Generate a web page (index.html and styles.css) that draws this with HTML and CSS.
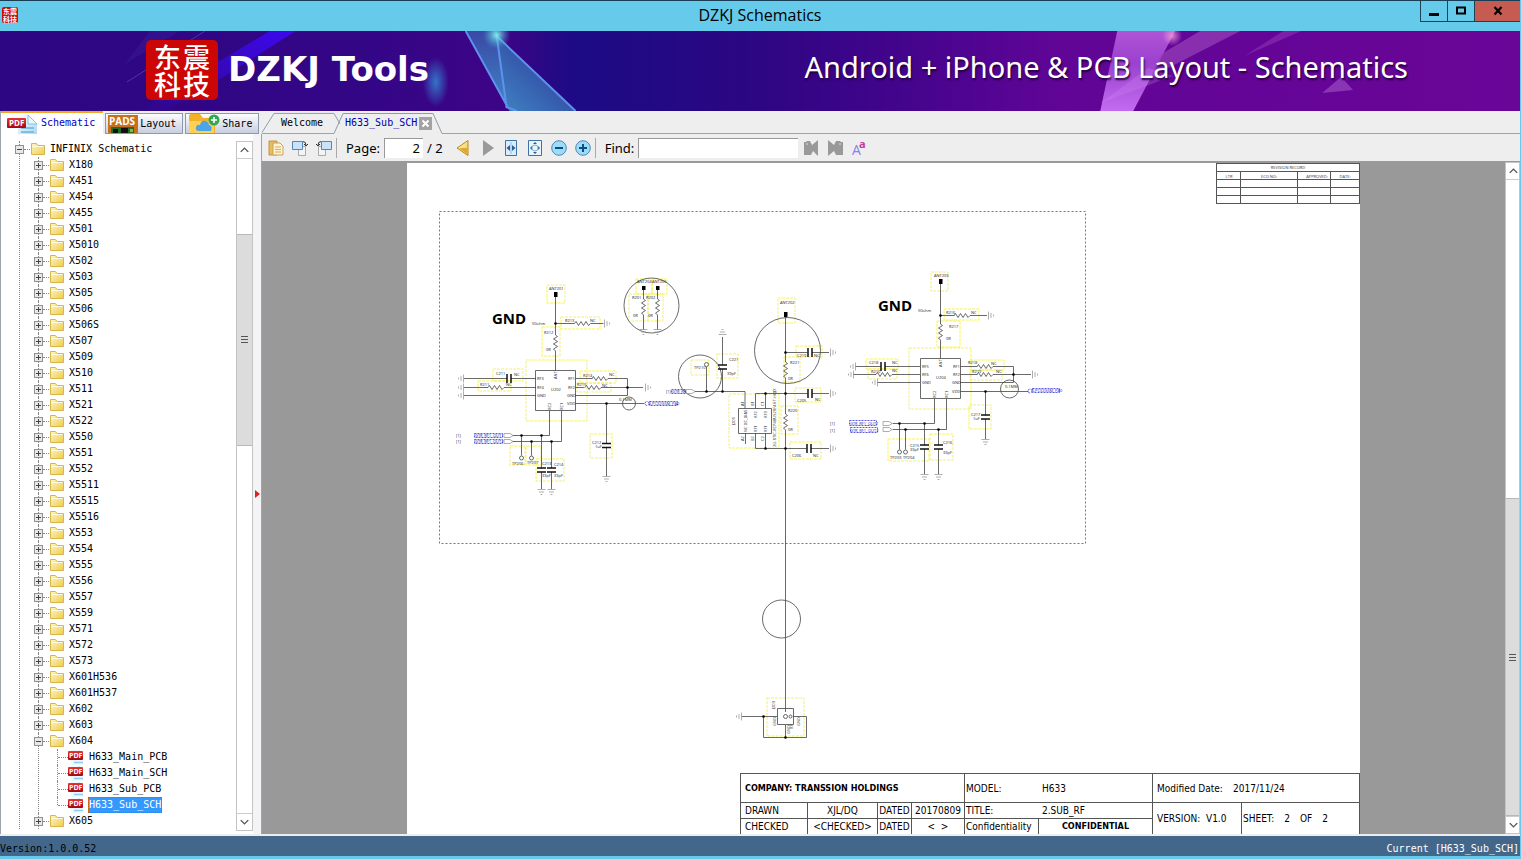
FILE: index.html
```html
<!DOCTYPE html>
<html lang="en">
<head>
    <meta charset="UTF-8">
    <meta name="viewport" content="width=device-width, initial-scale=1.0">
    <title>DZKJ Schematics</title>
    <link rel="stylesheet" href="styles.css">
</head>
<body>

    <!-- shared icons -->
    <svg class="defs" aria-hidden="true">
        <defs>
            <linearGradient id="gold" x1="0" y1="0" x2="1" y2="1">
                <stop offset="0" stop-color="#fff6bd"/><stop offset="1" stop-color="#efcb55"/>
            </linearGradient>
            <linearGradient id="paper" x1="0" y1="0" x2="1" y2="1">
                <stop offset="0" stop-color="#ffffff"/><stop offset="1" stop-color="#a9d8f5"/>
            </linearGradient>
            <linearGradient id="red" x1="0" y1="0" x2="0" y2="1">
                <stop offset="0" stop-color="#e2353b"/><stop offset="1" stop-color="#a80510"/>
            </linearGradient>
            <symbol id="folder" viewBox="0 0 16 14">
                <path d="M1.500 12.500v-11h5l1.500 2h6.500v9z" fill="url(#gold)" stroke="#d9b64c"/>
                <path d="M2.500 4.500h11" stroke="#fffbe0"/>
            </symbol>
            <symbol id="pdf" viewBox="0 0 16 16">
                <path d="M3 1h8l4 4v11H3z" fill="#eef7fd"/>
                <path d="M11 1l4 4h-4z" fill="#9fd3f0"/>
                <path d="M6 13.500h9" stroke="#8fcdf0" stroke-width="1.500"/>
                <rect x="0" y="2" width="15" height="9" rx="1" fill="url(#red)"/>
                <text x="1" y="9" font-size="7">PDF</text>
            </symbol>
            <symbol id="up" viewBox="0 0 16 16"><path d="M4 10l4-4 4 4" fill="none" stroke="#555" stroke-width="1.500"/></symbol>
            <symbol id="down" viewBox="0 0 16 16"><path d="M4 6l4 4 4-4" fill="none" stroke="#555" stroke-width="1.500"/></symbol>
        </defs>
    </svg>

    <header class="titlebar">
        <span class="app-icon">东震<br>科技</span>
        <h1>DZKJ Schematics</h1>
        <div class="window-buttons">
            <button aria-label="Minimize"><svg width="12" height="12"><path d="M1 9.500h10" stroke="#000" stroke-width="3"/></svg></button>
            <button aria-label="Maximize"><svg width="12" height="12"><path d="M2 2.500h8v6h-8z" fill="none" stroke="#000" stroke-width="2"/></svg></button>
            <button class="close" aria-label="Close"><svg width="12" height="12"><path d="M2.500 2l7 7.500M9.500 2l-7 7.500" stroke="#000" stroke-width="2.200"/></svg></button>
        </div>
    </header>

    <div class="banner">
        <svg class="banner-art" viewBox="0 0 1521 80" preserveAspectRatio="none" aria-hidden="true">
            <defs>
                <linearGradient id="back">
                    <stop offset="0" stop-color="#2d0683"/><stop offset=".25" stop-color="#340687"/>
                    <stop offset=".33" stop-color="#3d0486"/><stop offset=".38" stop-color="#1b0b84"/>
                    <stop offset=".5" stop-color="#2d0683"/><stop offset=".58" stop-color="#40048b"/>
                    <stop offset=".7" stop-color="#610597"/><stop offset="1" stop-color="#6a0598"/>
                </linearGradient>
                <linearGradient id="beam" x1="1" y1="0" x2="0" y2="1">
                    <stop offset="0" stop-color="#3d08ee"/><stop offset="1" stop-color="#3d08ee" stop-opacity="0"/>
                </linearGradient>
                <linearGradient id="glass" x1="0" y1="0" x2="0" y2="1">
                    <stop offset="0" stop-color="#3a48a6"/><stop offset="1" stop-color="#3f86c4"/>
                </linearGradient>
                <linearGradient id="pane" x1="0" y1="1" x2="1" y2="0">
                    <stop offset="0" stop-color="#3f86c4"/><stop offset="1" stop-color="#2c2a92"/>
                </linearGradient>
                <linearGradient id="pink" x1="0" y1="0" x2="0" y2="1">
                    <stop offset="0" stop-color="#b154d6"/><stop offset=".4" stop-color="#9b41cf"/><stop offset="1" stop-color="#c36bf0"/>
                </linearGradient>
                <radialGradient id="spot"><stop offset="0" stop-color="#3474c8"/><stop offset="1" stop-color="#3474c8" stop-opacity="0"/></radialGradient>
                <radialGradient id="flare"><stop offset="0" stop-color="#7ff0f0"/><stop offset="1" stop-color="#43a0c8" stop-opacity="0"/></radialGradient>
                <radialGradient id="glow"><stop offset="0" stop-color="#f7a0dc" stop-opacity=".8"/><stop offset="1" stop-color="#f394d7" stop-opacity="0"/></radialGradient>
            </defs>
            <rect width="1521" height="80" fill="url(#back)"/>
            <path d="M270 0h26L225 45 165 80h-28z" fill="url(#beam)"/>
            <path d="M205 0l-20 13M165 27l-38 24" stroke="#6650ba" stroke-width="1" opacity=".6"/>
            <path d="M150 0h30l-55 33z" fill="#3e249c" opacity=".35"/>
            <ellipse cx="436" cy="51" rx="13" ry="25" fill="url(#spot)"/>
            <path d="M466 0h31l10 76z" fill="url(#glass)"/>
            <path d="M497 5l79 75h-66l-3-4z" fill="url(#pane)"/>
            <path d="M466 0l42 76M497 5l10 72M497 5l79 75M507 76l10 4" fill="none" stroke="#5e91ec" stroke-width="2"/>
            <circle cx="497" cy="4" r="14" fill="url(#flare)"/>
            <path d="M1118 0h58l-42 80h-33z" fill="url(#pink)"/>
            <path d="M1201 0h40l-70 36-21 12 12-25z" fill="#9741b8" opacity=".7"/>
            <path d="M1284 0h18l-57 25z" fill="#8526ab" opacity=".8"/>
            <path d="M1323 62l19-16 12 13z" fill="#8935b4"/>
            <path d="M1101 72l73-27-25-8z" fill="#d28af5" opacity=".25"/>
            <circle cx="1173" cy="5" r="10" fill="url(#glow)"/>
        </svg>
        <div class="logo"><span>东</span><span>震</span><span>科</span><span>技</span></div>
        <strong>DZKJ Tools</strong>
        <p>Android + iPhone &amp; PCB Layout - Schematics</p>
    </div>

    <main>
        <aside class="sidebar">
            <nav class="side-tabs">
                <button class="active">
                    <svg width="32" height="20" viewBox="0 0 32 20"><path d="M11 1h10l9 9v10H11z" fill="url(#paper)"/><path d="M21 1l9 9h-9z" fill="#e9f7ff" stroke="#68aed0" stroke-width=".7"/><path d="M14 14h13M14 18h13" stroke="#81bee3" stroke-width="2"/><rect y="4" width="19" height="10" rx="1" fill="url(#red)"/><text x="2" y="12" font-size="8">PDF</text></svg>
                    Schematic
                </button>
                <button>
                    <svg width="32" height="18" viewBox="0 0 32 18"><path d="M1 0h30v18H1z" fill="#c8711c"/><path d="M4 12h23v6H4z" fill="#236c27"/><path d="M6 14h5v4H6zM14 13h7v5h-7z" fill="#111"/><path d="M23 14h3v3h-3z" fill="#8fb74a"/><text x="2" y="10" font-size="10">PADS</text></svg>
                    Layout
                </button>
                <button class="share">
                    <svg width="32" height="19" viewBox="0 0 32 19"><path d="M1 2q0-2 2-2h9l3 4h12v15H1z" fill="#f3b129"/><path d="M1 7h25v12H1z" fill="#ffd052"/><path d="M11 17q-4 0-3-4 1-3 4-2 1-5 6-4 3 1 3 4 4 1 2 6z" fill="#4ba5e6"/><circle cx="26" cy="6" r="5.500" fill="#32a852"/><path d="M26 3v6M23 6h6" stroke="#fff" stroke-width="1.600"/></svg>
                    Share
                </button>
            </nav>
            <div class="side-body">
                <div class="tree-pane">
                    <ul class="tree">
                        <li class="root"><button class="toggle open" aria-label="Collapse"></button><svg class="icon"><use href="#folder"/></svg>INFINIX Schematic
                            <ul id="folders"></ul>
                        </li>
                    </ul>
                    <div class="scrollbar side-scroll">
                        <button aria-label="Scroll up"><svg><use href="#up"/></svg></button>
                        <div class="track"><div class="thumb"></div></div>
                        <button aria-label="Scroll down"><svg><use href="#down"/></svg></button>
                    </div>
                </div>
                <div class="splitter"><svg width="5" height="8"><path d="M0 0l5 4-5 4z" fill="#e02020"/></svg></div>
            </div>
        </aside>

        <section class="workspace">
            <nav class="doc-tabs">
                <button class="doc-tab welcome"><svg viewBox="0 0 72 22" preserveAspectRatio="none"><path d="M0 21.500L12 1.500h60l6 11"/></svg>Welcome</button>
                <button class="doc-tab current"><svg viewBox="0 0 108 22" preserveAspectRatio="none"><path d="M0 21.500L9 1.500h90l9 20"/></svg>H633_Sub_SCH<span class="tab-close"><svg width="13" height="13"><path d="M3.500 3.500l6 6M9.500 3.500l-6 6"/></svg></span></button>
                <div class="tab-rest"></div>
            </nav>

            <div class="toolbar">
                <button aria-label="Open"><svg viewBox="0 0 16 16"><path d="M1 1h8v14H1z" fill="#e9bc60" stroke="#c2924a"/><path d="M5 3h7l3 3v9H5z" fill="#fff3d2" stroke="#cda055"/><path d="M7 7h6M7 9.500h6M7 12h6" stroke="#d7a95b"/></svg></button>
                <button aria-label="Rotate right"><svg viewBox="0 0 16 16"><path d="M6.500 6.500h7v9h-7z" fill="#f4f4f4" stroke="#aaa"/><path d="M.500 1.500h10v8H.500z" fill="#c9e4fa" stroke="#5487b5"/><path d="M11 1.500q3 0 3 4M12 4l2 2 2-2" fill="none" stroke="#333"/></svg></button>
                <button aria-label="Rotate left"><svg viewBox="0 0 16 16"><path d="M2.500 6.500h7v9h-7z" fill="#f4f4f4" stroke="#aaa"/><path d="M5.500 1.500h10v8h-10z" fill="#c9e4fa" stroke="#5487b5"/><path d="M5 1.500q-3 0-3 4M0 4l2 2 2-2" fill="none" stroke="#333"/></svg></button>
                <i class="sep"></i>
                <label for="page">Page:</label>
                <input type="text" id="page" value="2">
                <span class="count">/ 2</span>
                <button aria-label="Previous page"><svg viewBox="0 0 16 16"><path d="M13 .500v15L2 8z" fill="url(#gold)" stroke="#b98a19"/><path d="M12 8v6L4 8z" fill="#e0a82c"/></svg></button>
                <button aria-label="Next page"><svg viewBox="0 0 16 16"><path d="M4 0v16l11-8z" fill="#999"/></svg></button>
                <button aria-label="Fit width"><svg viewBox="0 0 16 16"><path d="M2.500.500h11v15h-11z" fill="#d9edfc" stroke="#3e71a7"/><path d="M8 2v12" stroke="#9dbbd6"/><path d="M7 5v6L3.500 8zM9 5v6l3.500-3z" fill="#245f9b"/></svg></button>
                <button aria-label="Fit page"><svg viewBox="0 0 16 16"><path d="M1.500.500h13v15h-13z" fill="#e9f5fe" stroke="#3e71a7"/><path d="M6 4l2-2 2 2zM6 12l2 2 2-2zM5 6L3 8l2 2zM11 6l2 2-2 2z" fill="#245f9b"/><circle cx="8" cy="8" r="3" fill="none" stroke="#86aaca"/></svg></button>
                <button aria-label="Zoom out"><svg viewBox="0 0 16 16"><circle cx="8" cy="8" r="7.300" fill="#9bdcfb" stroke="#5787b3"/><path d="M4 8h8" stroke="#0c4e82" stroke-width="2"/></svg></button>
                <button aria-label="Zoom in"><svg viewBox="0 0 16 16"><circle cx="8" cy="8" r="7.300" fill="#9bdcfb" stroke="#5787b3"/><path d="M4 8h8M8 4v8" stroke="#0c4e82" stroke-width="2"/></svg></button>
                <i class="sep"></i>
                <label for="find">Find:</label>
                <input type="text" id="find">
                <button aria-label="Find previous"><svg viewBox="0 0 16 16"><path d="M1 2h2l1-1h3l2 4 6-5v16l-5-5-2 4H1z" fill="#999"/><path d="M3 4h2" stroke="#ddd"/></svg></button>
                <button aria-label="Find next"><svg viewBox="0 0 16 16"><path d="M1 0l6 5 2-4h4l1 1h2v13H9l-2-4-6 5z" fill="#999"/><path d="M12 4h2" stroke="#ddd"/></svg></button>
                <button aria-label="Match case"><svg viewBox="0 0 16 16"><text x="1" y="15" font-size="14" fill="#8b7fe8">A</text><text x="8" y="8" font-size="11" font-weight="bold" fill="#c038a0">a</text></svg></button>
            </div>

            <div class="viewer">
                <div class="canvas">
                    <article class="sheet">
                        <table class="revision">
                            <colgroup><col class="r1"><col class="r2"><col class="r3"><col class="r4"></colgroup>
                            <tr><th colspan="4"><svg width="36" height="6"><text x="18" y="4" text-anchor="middle">REVISION RECORD</text></svg></th></tr>
                            <tr>
                                <th><svg width="20" height="6"><text x="10" y="5" text-anchor="middle">LTR</text></svg></th>
                                <th><svg width="36" height="6"><text x="18" y="5" text-anchor="middle">ECO NO:</text></svg></th>
                                <th><svg width="30" height="6"><text x="18" y="5" text-anchor="middle">APPROVED:</text></svg></th>
                                <th><svg width="20" height="6"><text x="10" y="5" text-anchor="middle">DATE:</text></svg></th>
                            </tr>
                            <tr><td></td><td></td><td></td><td></td></tr>
                            <tr><td></td><td></td><td></td><td></td></tr>
                            <tr><td></td><td></td><td></td><td></td></tr>
                        </table>

                        <svg class="drawing" viewBox="407 204 953 569">
                            <defs>
                                <path id="zh" d="M-8 0l1.500-2 2.500 4 2.500-4 2.500 4 2.500-4 2.500 4L8 0"/>
                                <path id="zv" d="M0-8l2 1.500-4 2.500 4 2.500-4 2.500 4 2.500-4 2.500L0 8"/>
                                <path id="ch" d="M-2-4.500v9M2-4.500v9"/>
                                <path id="cv" d="M-4.500-2h9M-4.500 2h9"/>
                                <path id="gr" d="M0-4v8M2.500-2.500v5M5-1v2"/>
                                <path id="gl" d="M0-4v8M-2.500-2.500v5M-5-1v2"/>
                                <path id="gd" d="M-4 0h8M-2.500 2.500h5M-1 5h2"/>
                                <path id="gu" d="M-4 0h8M-2.500-2.500h5M-1-5h2"/>
                                <path id="port" d="M0-2h6l3 2-3 2H0z"/>
                            </defs>

                            <rect class="frame" x="439.500" y="211.500" width="646" height="332"/>

                            <!-- component outlines -->
                            <path class="part" d="M547 285h18v18h-18zM561 317h39v12h-39zM542 327h18v29h-18zM526 360h61v61h-61zM493 369h30v12h-30zM478 381h33v10h-33zM580 371h36v12h-36zM577 383h34v9h-34zM590 434h22v24h-22zM510 446h15v19h-15zM526 446h15v19h-15zM536 459h28v22h-28z
                                M636 279h16v15h-16zM652 279h15v15h-15zM629 294h19v27h-19zM648 294h15v27h-15zM691 360h18v15h-18zM717 354h21v24h-21zM778 298h17v25h-17zM796 346h26v11h-26zM784 357h16v25h-16zM729 394h50v54h-50zM795 388h26v14h-26zM781 406h17v28h-17zM790 442h31v17h-31z
                                M931 272h17v19h-17zM944 309h35v11h-35zM937 321h23v26h-23zM909 348h62v61h-62zM866 359h32v10h-32zM868 369h29v10h-29zM970 360h34v10h-34zM970 370h32v10h-32zM969 405h22v24h-22zM888 439h41v22h-41zM930 434h23v26h-23zM767 698h37v38h-37z"/>

                            <!-- wires -->
                            <path class="wire" d="M555.500 292v43M555.500 351v20M555.500 323.500h19M590.500 323.500h13
                                M464 378.500h43M511 378.500h25M464 387.500h24M504 387.500h32M464 395.500h72
                                M575.500 378.500h17M608 378.500h19.500v17h-52M575.500 387.500h9M601 387.500h42M575.500 403.500h69M606.500 403.500v40M606.500 447v29
                                M549.500 411v24.500h-37M561.500 411v30.500h-49M521.500 435.500v20M531.500 441.500v14M541.500 435.500v33M551.500 441.500v27M541.500 472v17M551.500 472v17
                                M643.500 290v9M643.500 315v15M657.500 290v9M657.500 315v15
                                M706.500 367v24M695 391.500h50v17M722.500 337v28M722.500 369v22M785.500 316v46M785.500 378v36M785.500 430v282
                                M785.500 352.500h22M812 352.500h17M785.500 393.500h22M812 393.500h17M785.500 448.500h21M811 448.500h18
                                M785.500 393.500h-30v15M765.500 393.500v15M745.500 433v11M755.500 433v15.500h30M765.500 433v15
                                M940.500 283v41M940.500 340v18M940.500 315.500h14M970 315.500h17M855 366.500h26M885 366.500h35M853 374.500h23M892 374.500h28M877 382.500h43
                                M960.500 366.500h17M993 366.500h20.500v16h-53M960.500 374.500h17M993 374.500h38M960.500 391.500h68M985.500 391.500v24M985.500 419v20
                                M934.500 399v24.500h-42M946.500 399v30.500h-54M899.500 423.500v26M905.500 429.500v20M924.500 423.500v22M938.500 429.500v16M924.500 449v25M938.500 449v25
                                M742 716.500h35M763.500 716.500v21h43v-21h-13M785.500 725v12"/>
                            <path class="wire" d="M535.500 370.500h40v40h-40zM738.500 408.500h33v25h-33zM920.500 358.500h40v40h-40zM777.500 708.500h16v16h-16z"/>

                            <g class="wire">
                                <circle cx="651.500" cy="305.500" r="27.500"/><circle cx="700" cy="376.500" r="21.500"/><circle cx="787.500" cy="350.500" r="33"/>
                                <circle cx="629" cy="403.500" r="6.500"/><circle cx="1009.500" cy="389" r="9"/><circle cx="781.500" cy="619" r="19"/>
                                <circle cx="521.500" cy="458" r="2"/><circle cx="531.500" cy="458" r="2"/><circle cx="706.500" cy="364.500" r="2"/>
                                <circle cx="899.500" cy="452" r="2"/><circle cx="905.500" cy="452" r="2"/><circle cx="785.500" cy="716.500" r="2"/><circle cx="790.500" cy="716.500" r="1.500"/>
                                <use href="#zh" x="582.500" y="323.500"/><use href="#zv" x="555.500" y="343"/><use href="#zh" x="496" y="387.500"/>
                                <use href="#zh" x="600" y="378.500"/><use href="#zh" x="593" y="387.500"/><use href="#zv" x="643.500" y="307"/><use href="#zv" x="657.500" y="307"/>
                                <use href="#zv" x="785.500" y="370"/><use href="#zv" x="785.500" y="422"/><use href="#zh" x="962" y="315.500"/><use href="#zv" x="940.500" y="332"/>
                                <use href="#zh" x="884" y="374.500"/><use href="#zh" x="985" y="366.500"/><use href="#zh" x="985" y="374.500"/>
                            </g>
                            <g class="plates">
                                <use href="#ch" x="509" y="378.500"/><use href="#cv" x="606.500" y="445.500"/><use href="#cv" x="541.500" y="470"/><use href="#cv" x="551.500" y="470"/>
                                <use href="#cv" x="722.500" y="367"/><use href="#ch" x="810" y="352.500"/><use href="#ch" x="810" y="393.500"/><use href="#ch" x="809" y="448.500"/>
                                <use href="#ch" x="883" y="366.500"/><use href="#cv" x="985.500" y="417"/><use href="#cv" x="924.500" y="447"/><use href="#cv" x="938.500" y="447"/>
                            </g>
                            <g class="ground">
                                <use href="#gr" x="604.500" y="323.500"/><use href="#gl" x="463.500" y="378.500"/><use href="#gl" x="463.500" y="387.500"/><use href="#gl" x="463.500" y="395.500"/><use href="#gr" x="645.500" y="387.500"/>
                                <use href="#gd" x="606.500" y="476.500"/><use href="#gd" x="541.500" y="489.500"/><use href="#gd" x="551.500" y="489.500"/><use href="#gd" x="643.500" y="329.500"/><use href="#gd" x="657.500" y="329.500"/>
                                <use href="#gu" x="722.500" y="334.500"/><use href="#gr" x="830.500" y="352.500"/><use href="#gr" x="830.500" y="393.500"/><use href="#gr" x="830.500" y="448.500"/>
                                <use href="#gr" x="988.500" y="315.500"/><use href="#gl" x="855.500" y="366.500"/><use href="#gl" x="853.500" y="374.500"/><use href="#gl" x="877.500" y="382.500"/><use href="#gr" x="1032.500" y="374.500"/>
                                <use href="#gd" x="985.500" y="439.500"/><use href="#gd" x="924.500" y="474.500"/><use href="#gd" x="938.500" y="474.500"/><use href="#gl" x="741.500" y="716.500"/>
                                <use href="#port" x="504" y="435.500"/><use href="#port" x="504" y="441.500"/><use href="#port" x="686" y="391.500"/><use href="#port" x="883" y="423.500"/><use href="#port" x="883" y="429.500"/>
                            </g>

                            <path d="M554 292h3.500v5H554zM642 286h3.500v4H642zM656 286h3.500v4H656zM784 312h3.500v5H784zM939 279h3.500v5H939z"/>
                            <g id="dots"></g>

                            <!-- net labels -->
                            <g class="netbox">
                                <path d="M474.500 433.500h28v4h-28zM474.500 439.500h28v4h-28zM671.500 389.500h14v4h-14zM849.500 420.500h27v5h-27zM850.500 427.500h27v5h-27zM649.500 401.500h28v4h-28zM1032.500 388.500h27v4h-27z"/>
                                <circle cx="647" cy="403.500" r="2"/><circle cx="1030" cy="391" r="2"/>
                            </g>
                            <g class="net">
                                <text x="475" y="437">GTR_RF1_OUT1</text><text x="475" y="443">GTR_RF1_OUT2</text>
                                <text x="672" y="393">GTR_RF</text><text x="850" y="425">GTR_RF1_OUT1</text><text x="850" y="432">GTR_RF1_OUT2</text>
                                <text x="650" y="405">LPCX2GSM_PA0</text><text x="1033" y="392">LPCX2GSM_PA0</text>
                            </g>

                            <text class="gnd" x="492" y="324">GND</text>
                            <text class="gnd" x="878" y="311">GND</text>
                            <g class="tag">
                                <text x="549" y="290">ANT201</text><text x="532" y="325">50ohm</text><text x="565" y="322">R213</text><text x="590" y="322">NC</text>
                                <text x="544" y="334">R212</text><text x="546" y="351">0R</text><text x="496" y="375">C211</text><text x="514" y="376">NC</text>
                                <text x="480" y="386">R211</text><text x="506" y="386">NC</text><text x="583" y="377">R214</text><text x="609" y="376">NC</text>
                                <text x="577" y="386">R215</text><text x="602" y="387">NC</text><text x="551" y="391">U202</text><text x="537" y="380">RF3</text>
                                <text x="537" y="389">RF4</text><text x="537" y="397">GND</text><text x="568" y="380">RF1</text><text x="568" y="389">RF2</text>
                                <text x="567" y="397">GND</text><text x="567" y="405">VDD</text><text x="619" y="401">0.1MM</text><text x="592" y="444">C212</text>
                                <text x="595" y="448">1uF</text><text x="512" y="465">TP206</text><text x="527" y="464">TP207</text><text x="542" y="465">C213</text>
                                <text x="554" y="466">C214</text><text x="542" y="477">33pF</text><text x="554" y="477">33pF</text><text x="456" y="437">[1]</text><text x="456" y="443">[1]</text>
                                <text x="637" y="283">ANT204</text><text x="652" y="283">ANT205</text><text x="632" y="299">R201</text><text x="646" y="299">R202</text><text x="633" y="317">0R</text><text x="648" y="317">0R</text>
                                <text x="694" y="369">TP210</text><text x="729" y="361">C221</text><text x="727" y="375">39pF</text><text x="666" y="393">[1]</text><text x="780" y="304">ANT202</text>
                                <text x="797" y="357">C219</text><text x="814" y="357">NC</text><text x="790" y="364">R221</text><text x="788" y="380">0R</text><text x="797" y="402">C205</text><text x="815" y="401">NC</text>
                                <text x="788" y="412">R220</text><text x="788" y="431">0R</text><text x="792" y="457">C206</text><text x="813" y="457">NC</text>
                                <text x="934" y="277">ANT203</text><text x="918" y="312">50ohm</text><text x="946" y="314">R216</text><text x="971" y="314">NC</text><text x="949" y="328">R217</text><text x="946" y="340">0R</text>
                                <text x="869" y="364">C218</text><text x="892" y="364">NC</text><text x="871" y="373">R210</text><text x="892" y="372">NC</text><text x="922" y="368">RF5</text><text x="922" y="376">RF6</text><text x="922" y="384">GND</text>
                                <text x="936" y="379">U204</text><text x="953" y="368">RF1</text><text x="953" y="376">RF2</text><text x="952" y="384">GND</text><text x="952" y="393">VDD</text><text x="968" y="364">R218</text><text x="991" y="365">NC</text>
                                <text x="972" y="373">R219</text><text x="996" y="373">NC</text><text x="1005" y="388">0.1MM</text><text x="971" y="416">C217</text><text x="973" y="420">1uF</text><text x="910" y="447">C215</text><text x="910" y="451">33pF</text>
                                <text x="943" y="444">C216</text><text x="943" y="454">33pF</text><text x="890" y="459">TP203</text><text x="903" y="459">TP204</text><text x="830" y="425">[1]</text><text x="830" y="432">[1]</text>
                                <g id="vertical"></g>
                            </g>
                        </svg>

                        <table class="title-block">
                            <colgroup><col class="c1"><col class="c2"><col class="c3"><col class="c4"><col class="c5"><col class="c6"><col class="c7"><col class="c8"></colgroup>
                            <tr class="tall">
                                <th colspan="4">COMPANY: TRANSSION HOLDINGS</th>
                                <td colspan="2" class="flush"><span class="pair"><span>MODEL:</span><span>H633</span></span></td>
                                <td colspan="2"><span class="pair"><span>Modified Date:</span><span>2017/11/24</span></span></td>
                            </tr>
                            <tr>
                                <td>DRAWN</td><td class="mid">XJL/DQ</td><td class="mid">DATED</td><td class="mid">20170809</td>
                                <td colspan="2" class="flush"><span class="pair"><span>TITLE:</span><span>2.SUB_RF</span></span></td>
                                <td rowspan="2">VERSION:&nbsp; V1.0</td><td rowspan="2" class="flush"><span class="sheet-no"><span>SHEET:</span><span>2</span><span>OF</span><span>2</span></span></td>
                            </tr>
                            <tr>
                                <td>CHECKED</td><td class="mid">&lt;CHECKED&gt;</td><td class="mid">DATED</td><td class="mid">&lt; &nbsp;&gt;</td>
                                <td class="flush">Confidentiality</td><th class="mid">CONFIDENTIAL</th>
                            </tr>
                        </table>
                    </article>
                </div>
                <div class="scrollbar page-scroll">
                    <button aria-label="Scroll up"><svg><use href="#up"/></svg></button>
                    <div class="track"><div class="thumb"></div></div>
                    <button aria-label="Scroll down"><svg><use href="#down"/></svg></button>
                </div>
            </div>
        </section>
    </main>

    <footer class="statusbar">
        <span>Version:1.0.0.52</span>
        <span class="current-file">Current [H633_Sub_SCH]</span>
    </footer>

    <script src="script.js"></script>
</body>
</html>
```
FILE: styles.css
```css
* {
    box-sizing: border-box;
}
body {
    margin: 0;
    height: 100vh;
    display: flex;
    flex-direction: column;
    overflow: hidden;
    background: #eeeeee;
    border-right: 1px solid #66cbea;
    border-bottom: 3px solid #68c8e8;
    font: 10px/16px "DejaVu Sans Mono", "Noto Sans CJK SC", monospace;
    color: #000;
}
button {
    margin: 0;
    padding: 0;
    border: none;
    background: none;
    font: inherit;
    color: inherit;
}
svg {
    display: block;
    flex: none;
}
svg text {
    font-family: "Open Sans", sans-serif;
}
.defs {
    position: absolute;
    width: 0;
    height: 0;
}

/* title bar */
.titlebar {
    flex: none;
    display: grid;
    grid-template-columns: 1fr auto 1fr;
    height: 31px;
    background: #66cbea;
    border-top: 1px solid #173e55;
}
.titlebar h1 {
    margin: 0;
    font: 16px/28px "Open Sans", sans-serif;
}
.app-icon {
    width: 16px;
    height: 16px;
    margin: 6px 2px;
    border-radius: 2px;
    background: #c80a0a;
    color: #fff;
    font: bold 7px/8px "Noto Sans CJK SC", sans-serif;
    text-align: center;
}
.window-buttons {
    justify-self: end;
    display: flex;
    height: 21px;
    border: 1px solid #1c4354;
    border-width: 0 0 1px 1px;
}
.window-buttons button {
    width: 27px;
    display: grid;
    place-items: center;
    border-right: 1px solid #1c4354;
}
.window-buttons .close {
    width: 45px;
    background: #c65b51;
    border: none;
}

/* banner */
.banner {
    flex: none;
    position: relative;
    display: flex;
    align-items: center;
    height: 80px;
    padding: 0 112px 0 146px;
    color: #fff;
}
.banner-art {
    position: absolute;
    inset: 0;
    width: 100%;
    height: 100%;
}
.logo, .banner strong, .banner p {
    position: relative;
}
.logo {
    display: grid;
    grid-template-columns: 29px 29px;
    place-content: center;
    width: 72px;
    height: 60px;
    margin-bottom: 2px;
    border-radius: 5px;
    background: #cc0505;
    font: 500 27px/27px "Noto Sans CJK SC", sans-serif;
    text-align: center;
}
.banner strong {
    margin: 0 0 4px 10px;
    font: bold 34px/40px "DejaVu Sans", sans-serif;
}
.banner p {
    margin: 0 0 8px auto;
    font: 29px/40px "Noto Sans", sans-serif;
    text-shadow: 1px 2px 2px #24003c;
}

main {
    flex: 1;
    min-height: 0;
    display: flex;
    padding-bottom: 2px;
}

/* sidebar */
.sidebar {
    width: 262px;
    flex: none;
    display: flex;
    flex-direction: column;
    border-left: 1px solid #9aa5ad;
}
.side-tabs {
    flex: none;
    display: flex;
    align-items: flex-end;
    gap: 2px;
    height: 23px;
}
.side-tabs button {
    display: flex;
    align-items: flex-end;
    gap: 1px;
    height: 21px;
    padding: 0 6px 0 1px;
    border: 1px solid #8a9bb0;
    background: linear-gradient(#fdfdff, #c8cde0);
    line-height: 19px;
}
.side-tabs .share {
    gap: 2px;
    padding-left: 2px;
}
.side-tabs .active {
    height: 23px;
    padding: 0 8px 0 6px;
    gap: 2px;
    border: none;
    border-top: 2px solid #f5a623;
    background: #fff;
    color: #0000c8;
    line-height: 22px;
}
.side-tabs text, #pdf text {
    fill: #fff;
    font-weight: bold;
}
.side-body {
    flex: 1;
    min-height: 0;
    display: flex;
}
.tree-pane {
    flex: 1;
    display: flex;
    overflow: hidden;
    padding: 7px 0 3px;
    background: #fff;
}
.tree {
    flex: 1;
    overflow: hidden;
    padding-left: 14px;
}
.tree, .tree ul {
    margin: 0;
    list-style: none;
}
.tree ul {
    padding-left: 19px;
}
.tree li {
    position: relative;
    white-space: nowrap;
}
.tree li::before {
    content: "";
    position: absolute;
    left: 4px;
    top: 0;
    bottom: 0;
    border-left: 1px dotted #888;
}
.tree .file:last-child::before {
    bottom: auto;
    height: 8px;
}
.toggle, .dots {
    position: relative;
    display: inline-block;
    vertical-align: top;
    width: 9px;
    height: 9px;
    margin: 4px 6px 0 0;
    border: 1px solid #919191;
    background: linear-gradient(#444, #444) center / 5px 1px no-repeat, linear-gradient(#444, #444) center / 1px 5px no-repeat, #e8e8e8;
}
.toggle.open {
    background: linear-gradient(#444, #444) center / 5px 1px no-repeat, #e8e8e8;
}
.toggle::after {
    content: "";
    position: absolute;
    left: 8px;
    top: 3px;
    width: 6px;
    border-top: 1px dotted #888;
}
.dots {
    width: 10px;
    height: 1px;
    margin: 8px 0 0 5px;
    border: none;
    border-top: 1px dotted #888;
    background: none;
}
.icon {
    display: inline-block;
    vertical-align: top;
    width: 16px;
    height: 14px;
    margin: 1px 4px 0 0;
}
.file .icon {
    height: 16px;
    margin-top: 0;
}
.file a {
    display: inline-block;
    padding: 0 1px;
    color: #000;
    text-decoration: none;
}
.file a.selected {
    color: #fff;
    background: #3399ff;
    outline: 1px dotted #c06010;
    outline-offset: -1px;
}
.splitter {
    width: 9px;
    display: flex;
    align-items: center;
    padding: 20px 0 0 2px;
    border-right: 1px solid #9aa5ad;
    background: #f4f4f6;
}

/* scrollbars */
.scrollbar {
    flex: none;
    display: flex;
    flex-direction: column;
    width: 17px;
    background: #fff;
    border: 1px solid #c4c4c4;
}
.scrollbar button {
    height: 16px;
    background: #fff;
}
.scrollbar button svg {
    width: 15px;
    height: 16px;
}
.track {
    flex: 1;
    display: grid;
    grid-template-rows: 75fr 213fr 369fr;
    border: 1px solid #ccc;
    border-width: 1px 0;
}
.thumb {
    grid-row: 2;
    display: grid;
    place-items: center;
    background: #dcdcdc;
    border: 1px solid #b8b8b8;
    border-width: 1px 0;
}
.thumb::before {
    content: "";
    width: 7px;
    height: 7px;
    background: repeating-linear-gradient(#555 0 1px, transparent 1px 3px);
}
.page-scroll {
    width: 15px;
}
.page-scroll .track {
    grid-template-rows: 321fr 320fr 0fr;
}

/* document tabs */
.workspace {
    flex: 1;
    min-width: 0;
    display: flex;
    flex-direction: column;
}
.doc-tabs {
    flex: none;
    display: flex;
    height: 23px;
    padding-top: 1px;
}
.doc-tab {
    position: relative;
    display: flex;
    align-items: center;
}
.doc-tab > svg {
    position: absolute;
    inset: 0;
    width: 100%;
    height: 100%;
    overflow: visible;
    fill: none;
    stroke: #8b9dac;
}
.welcome {
    width: 72px;
    padding-left: 19px;
    border-bottom: 1px solid #9aa5ad;
}
.current {
    width: 108px;
    padding-left: 11px;
    color: #0000b4;
}
.tab-close {
    width: 13px;
    height: 13px;
    margin-left: 2px;
    background: #a3a3a3;
    stroke: #fff;
    stroke-width: 2;
}
.tab-rest {
    flex: 1;
    border-bottom: 1px solid #9aa5ad;
}

/* toolbar */
.toolbar {
    flex: none;
    display: flex;
    align-items: center;
    gap: 8px;
    height: 28px;
    padding-left: 6px;
    border-bottom: 1px solid #999;
    font: 13px/20px "Noto Sans", sans-serif;
}
.toolbar button svg {
    width: 16px;
    height: 16px;
    overflow: visible;
}
.toolbar input {
    height: 20px;
    border: 1px solid #999;
    border-width: 1px 0 0 1px;
    padding: 0 3px;
    background: #fff;
    font: inherit;
    text-align: right;
}
#page {
    width: 39px;
    margin-left: -4px;
}
#find {
    width: 160px;
    margin-left: -4px;
    margin-right: -3px;
    text-align: left;
}
.count {
    margin: 0 4px 0 -4px;
}
.sep {
    width: 1px;
    height: 20px;
    margin: 0 1px 0 -4px;
    background: #aaa;
}

/* viewer */
.viewer {
    flex: 1;
    min-height: 0;
    display: flex;
}
.canvas {
    flex: 1;
    display: flex;
    justify-content: center;
    align-items: flex-start;
    overflow: hidden;
    padding-top: 1px;
    background: #999;
}
.sheet {
    flex: none;
    width: 953px;
    display: flex;
    flex-direction: column;
    background: #fff;
    font: 10px/15px "DejaVu Sans Condensed", "DejaVu Sans", sans-serif;
}
table {
    border-collapse: collapse;
    table-layout: fixed;
    align-self: flex-end;
}
th, td {
    border: 1px solid #555;
    padding: 0 4px;
    text-align: left;
    white-space: nowrap;
}
th {
    font-size: 9px;
}
.revision {
    width: 143px;
}
.revision tr {
    height: 8px;
}
.revision th, .revision td {
    height: 8px;
    padding: 0;
    line-height: 6px;
}
.revision svg {
    margin: 0 auto;
}
.revision text {
    font-size: 4px;
    font-weight: normal;
    fill: #333;
}
.r1 { width: 24px; }
.r2 { width: 57px; }
.r3 { width: 33px; }
.r4 { width: 29px; }
.drawing {
    width: 953px;
    height: 569px;
}
.frame {
    fill: none;
    stroke: #777;
    stroke-dasharray: 2 2;
}
.wire, .ground, .part, .plates, .netbox {
    fill: none;
    stroke: #444;
    stroke-width: 0.8;
}
.ground {
    stroke: #999;
}
.part {
    stroke: #f4ee3c;
    stroke-dasharray: 3 1;
}
.plates {
    stroke: #111;
    stroke-width: 1.5;
}
.netbox {
    stroke: #3434d8;
    stroke-dasharray: 2 1;
}
.net {
    fill: #2222c0;
    font-size: 4px;
}
.tag {
    fill: #222;
    font-size: 4px;
}
.drawing .gnd {
    font: bold 15px "Open Sans", sans-serif;
}
.title-block {
    width: 620px;
}
.title-block tr {
    height: 16px;
}
.title-block .tall {
    height: 29px;
}
.title-block .mid {
    padding: 0;
    text-align: center;
}
.title-block .flush {
    padding: 0 1px;
}
.c1 { width: 67px; }
.c2 { width: 70px; }
.c3 { width: 34px; }
.c4 { width: 53px; }
.c5 { width: 74px; }
.c6 { width: 114px; }
.c7 { width: 89px; }
.c8 { width: 118px; }
.pair {
    display: grid;
    grid-template-columns: 76px auto;
}
.sheet-no {
    display: flex;
    gap: 10px;
}

/* status bar */
.statusbar {
    flex: none;
    display: flex;
    justify-content: space-between;
    height: 20px;
    padding: 0 1px 0 0;
    background: #43678a;
    line-height: 26px;
}
.current-file {
    color: #fff;
}
```
FILE: script.js
```js
const folders = [
    'X180', 'X451', 'X454', 'X455', 'X501', 'X5010', 'X502', 'X503', 'X505', 'X506', 'X506S',
    'X507', 'X509', 'X510', 'X511', 'X521', 'X522', 'X550', 'X551', 'X552', 'X5511', 'X5515',
    'X5516', 'X553', 'X554', 'X555', 'X556', 'X557', 'X559', 'X571', 'X572', 'X573',
    'X601H536', 'X601H537', 'X602', 'X603', 'X604', 'X605'
];
const files = {
    X604: ['H633_Main_PCB', 'H633_Main_SCH', 'H633_Sub_PCB', 'H633_Sub_SCH']
};
const current = 'H633_Sub_SCH';

function fileRow(name) {
    const cls = name === current ? ' class="selected"' : '';
    return `<li class="file"><span class="dots"></span><svg class="icon"><use href="#pdf"/></svg><a href="#"${cls}>${name}</a></li>`;
}

function folderRow(name) {
    const list = files[name];
    const toggle = list ? '<button class="toggle open" aria-label="Collapse"></button>' : '<button class="toggle" aria-label="Expand"></button>';
    const inner = list ? `<ul>${list.map(fileRow).join('')}</ul>` : '';
    return `<li>${toggle}<svg class="icon"><use href="#folder"/></svg>${name}${inner}</li>`;
}

document.getElementById('folders').innerHTML = folders.map(folderRow).join('');

// wire junctions
const junctions = [
    [555.5, 323.5], [627.5, 387.5], [606.5, 403.5], [521.5, 435.5], [541.5, 435.5], [531.5, 441.5], [551.5, 441.5],
    [706.5, 391.5], [722.5, 391.5], [785.5, 352.5], [785.5, 393.5], [785.5, 448.5], [765.5, 393.5], [765.5, 448.5],
    [940.5, 315.5], [1013.5, 374.5], [985.5, 391.5], [899.5, 423.5], [924.5, 423.5], [905.5, 429.5], [938.5, 429.5],
    [763.5, 716.5], [785.5, 737.5]
];
document.getElementById('dots').innerHTML = junctions.map(([x, y]) => `<circle cx="${x}" cy="${y}" r="1.3"/>`).join('');

// labels that read bottom to top
const vertical = [
    [557, 379, 'ANT'], [551, 410, 'RC2'], [563, 410, 'RC1'], [942, 367, 'ANT'], [936, 398, 'RC2'], [948, 398, 'RC1'],
    [735, 425, 'J201'], [747, 432, 'NC DC_BIAS'], [757, 418, 'RF2'], [767, 418, 'RF3'], [757, 432, 'RF1'], [767, 432, 'RF1'],
    [744, 406, 'A1'], [754, 406, 'B1'], [764, 406, 'C1'], [744, 441, 'A2'], [754, 441, 'B2'], [764, 441, 'C2'],
    [776, 447, '2G-RTIC-RCP4BUS2RF4HT-HQJX'],
    [775, 709, 'J203'], [776, 726, 'GND'], [800, 726, 'GND'], [790, 734, 'GND'], [793, 729, 'RF']
];
document.getElementById('vertical').innerHTML = vertical.map(([x, y, t]) => `<text transform="translate(${x} ${y}) rotate(-90)">${t}</text>`).join('');
```
